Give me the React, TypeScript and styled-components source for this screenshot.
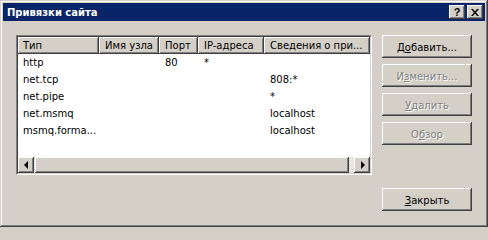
import React from 'react';
import styled, { createGlobalStyle } from 'styled-components';

const GlobalStyle = createGlobalStyle`
  html, body {
    margin: 0;
    padding: 0;
    background: #d4d0c8;
  }
  body {
    font-family: "DejaVu Sans", "Liberation Sans", sans-serif;
    font-size: 10px;
    color: #000;
  }
`;

const raised = `
  box-shadow: inset -1px -1px #404040, inset 1px 1px #ffffff,
    inset -2px -2px #808080, inset 2px 2px #d4d0c8;
`;

const Window = styled.div`
  width: 488px;
  height: 227px;
  box-sizing: border-box;
  padding: 3px;
  background: #d4d0c8;
  display: flex;
  flex-direction: column;
  box-shadow: inset -1px -1px #404040, inset 1px 1px #d4d0c8,
    inset -2px -2px #808080, inset 2px 2px #ffffff;
`;

const TitleBar = styled.div`
  height: 18px;
  flex: 0 0 18px;
  background: #0a246a;
  display: flex;
  align-items: center;
  padding: 0 2px;
`;

const Title = styled.span`
  color: #ffffff;
  font-weight: bold;
  font-size: 10px;
  padding-left: 2px;
`;

const CaptionButtons = styled.div`
  margin-left: auto;
  display: flex;
  gap: 2px;
`;

const CaptionButton = styled.div`
  width: 16px;
  height: 14px;
  background: #d4d0c8;
  ${raised}
  display: flex;
  align-items: center;
  justify-content: center;
  font-family: "Liberation Sans", sans-serif;
  font-weight: bold;
  font-size: 11px;
  line-height: 14px;
`;

const Body = styled.div`
  flex: 1;
  display: flex;
  gap: 10px;
  padding: 14px 13px 13px 13px;
`;

const ListFrame = styled.div`
  width: 356px;
  height: 140px;
  box-sizing: border-box;
  border-top: 1px solid #808080;
  border-left: 1px solid #808080;
  border-right: 1px solid #ffffff;
  border-bottom: 1px solid #ffffff;
`;

const ListInner = styled.div`
  height: 100%;
  box-sizing: border-box;
  border-top: 1px solid #404040;
  border-left: 1px solid #404040;
  border-right: 1px solid #d4d0c8;
  border-bottom: 1px solid #d4d0c8;
  background: #ffffff;
  display: flex;
  flex-direction: column;
`;

const columns = '81px 60px 39px 66px 106px';

const HeaderRow = styled.div`
  display: grid;
  grid-template-columns: ${columns};
  height: 17px;
`;

const HeaderCell = styled.div<{ $first?: boolean }>`
  background: #d4d0c8;
  box-shadow: inset -1px -1px #404040, inset 1px 1px #ffffff,
    inset -2px -2px #808080;
  padding-left: ${(p) => (p.$first ? '5px' : '6px')};
  line-height: 17px;
  white-space: nowrap;
  overflow: hidden;
`;

const Rows = styled.div`
  flex: 1;
`;

const Row = styled.div`
  display: grid;
  grid-template-columns: ${columns};
  height: 17px;
`;

const Cell = styled.div<{ $first?: boolean }>`
  padding-left: ${(p) => (p.$first ? '5px' : '6px')};
  line-height: 17px;
  white-space: nowrap;
  overflow: hidden;
`;

const ScrollBar = styled.div`
  height: 16px;
  display: flex;
`;

const ArrowButton = styled.div`
  width: 16px;
  height: 16px;
  flex: 0 0 16px;
  background: #d4d0c8;
  ${raised}
  display: flex;
  align-items: center;
  justify-content: center;
`;

const Arrow = styled.div<{ $dir: 'left' | 'right' }>`
  width: 0;
  height: 0;
  border-top: 4px solid transparent;
  border-bottom: 4px solid transparent;
  ${(p) =>
    p.$dir === 'left'
      ? 'border-right: 4px solid #000; margin-left: -1px;'
      : 'border-left: 4px solid #000; margin-left: 1px;'}
`;

const Track = styled.div`
  flex: 1;
  display: flex;
  padding-left: 1px;
  background-image: repeating-conic-gradient(#ffffff 0 25%, #d4d0c8 0 50%);
  background-size: 2px 2px;
`;

const Thumb = styled.div`
  flex: 0 0 314px;
  height: 16px;
  background: #d4d0c8;
  ${raised}
`;

const ButtonColumn = styled.div`
  width: 90px;
  display: flex;
  flex-direction: column;
  gap: 6px;
`;

const Button = styled.div<{ $disabled?: boolean; $bottom?: boolean }>`
  height: 23px;
  flex: 0 0 23px;
  background: #d4d0c8;
  ${raised}
  display: flex;
  align-items: center;
  justify-content: center;
  color: ${(p) => (p.$disabled ? '#808080' : '#000000')};
  text-shadow: ${(p) => (p.$disabled ? '1px 1px 0 #ffffff' : 'none')};
  margin-top: ${(p) => (p.$bottom ? 'auto' : '0')};
  padding-top: 1px;
  box-sizing: border-box;
`;

const Accel = styled.span`
  text-decoration: underline;
  text-underline-offset: 1px;
`;

const bindings = [
  { type: 'http', host: '', port: '80', ip: '*', info: '' },
  { type: 'net.tcp', host: '', port: '', ip: '', info: '808:*' },
  { type: 'net.pipe', host: '', port: '', ip: '', info: '*' },
  { type: 'net.msmq', host: '', port: '', ip: '', info: 'localhost' },
  { type: 'msmq.forma...', host: '', port: '', ip: '', info: 'localhost' },
];

function App() {
  return (
    <>
      <GlobalStyle />
      <Window>
        <TitleBar>
          <Title>Привязки сайта</Title>
          <CaptionButtons>
            <CaptionButton>?</CaptionButton>
            <CaptionButton>
              <svg width="8" height="7" viewBox="0 0 8 7">
                <path d="M0 0h2l2 2.5L6 0h2L5 3.5 8 7H6L4 4.5 2 7H0l3-3.5z" fill="#000" />
              </svg>
            </CaptionButton>
          </CaptionButtons>
        </TitleBar>
        <Body>
          <ListFrame>
            <ListInner>
              <HeaderRow>
                <HeaderCell $first>Тип</HeaderCell>
                <HeaderCell>Имя узла</HeaderCell>
                <HeaderCell>Порт</HeaderCell>
                <HeaderCell>IP-адреса</HeaderCell>
                <HeaderCell>Сведения о при...</HeaderCell>
              </HeaderRow>
              <Rows>
                {bindings.map((b) => (
                  <Row key={b.type}>
                    <Cell $first>{b.type}</Cell>
                    <Cell>{b.host}</Cell>
                    <Cell>{b.port}</Cell>
                    <Cell>{b.ip}</Cell>
                    <Cell>{b.info}</Cell>
                  </Row>
                ))}
              </Rows>
              <ScrollBar>
                <ArrowButton>
                  <Arrow $dir="left" />
                </ArrowButton>
                <Track>
                  <Thumb />
                </Track>
                <ArrowButton>
                  <Arrow $dir="right" />
                </ArrowButton>
              </ScrollBar>
            </ListInner>
          </ListFrame>
          <ButtonColumn>
            <Button>
              Д<Accel>о</Accel>бавить...
            </Button>
            <Button $disabled>
              И<Accel>з</Accel>менить...
            </Button>
            <Button $disabled>
              <Accel>У</Accel>далить
            </Button>
            <Button $disabled>
              О<Accel>б</Accel>зор
            </Button>
            <Button $bottom>
              <Accel>З</Accel>акрыть
            </Button>
          </ButtonColumn>
        </Body>
      </Window>
    </>
  );
}

export default App;
